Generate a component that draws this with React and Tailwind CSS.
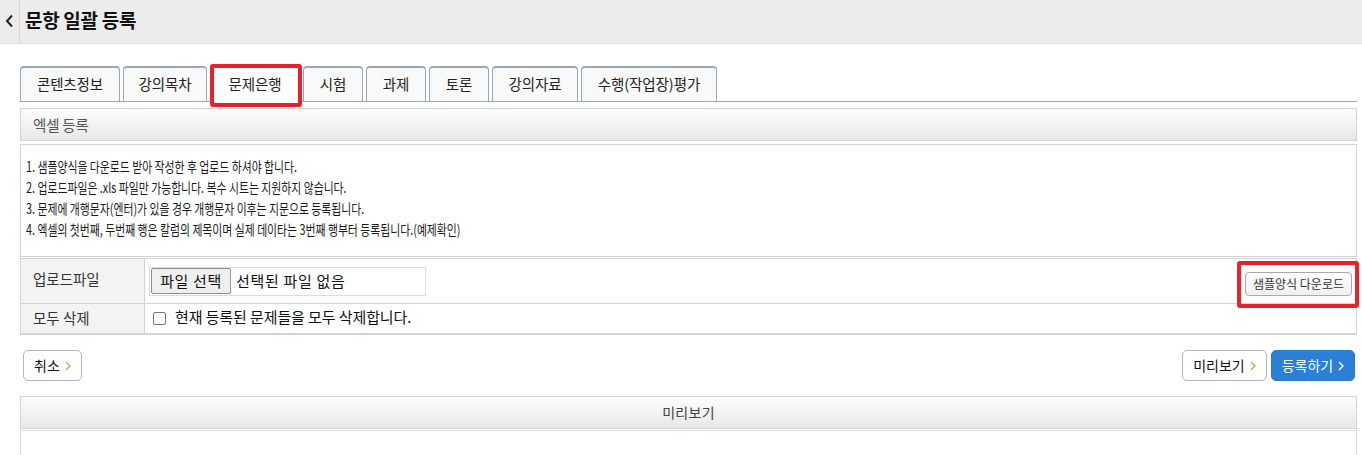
import React from "react";

const tabs = [
  { label: "콘텐츠정보", cls: "w-[100px]" },
  { label: "강의목차", cls: "w-[84px]" },
  { label: "문제은행", cls: "w-[90px]", active: true },
  { label: "시험", cls: "w-[60px]" },
  { label: "과제", cls: "w-[60px]" },
  { label: "토론", cls: "w-[60px]" },
  { label: "강의자료", cls: "w-[86px]" },
  { label: "수행(작업장)평가", cls: "w-[136px]" },
];

const notes = [
  "1. 샘플양식을 다운로드 받아 작성한 후 업로드 하셔야 합니다.",
  "2. 업로드파일은 .xls 파일만 가능합니다. 복수 시트는 지원하지 않습니다.",
  "3. 문제에 개행문자(엔터)가 있을 경우 개행문자 이후는 지문으로 등록됩니다.",
  "4. 엑셀의 첫번째, 두번째 행은 칼럼의 제목이며 실제 데이타는 3번째 행부터 등록됩니다.(예제확인)",
];

function Chevron({ color = "#c9a35a" }) {
  return (
    <svg width="6" height="10" viewBox="0 0 6 10" className="ml-[5px]">
      <path d="M1 1 L5 5 L1 9" fill="none" stroke={color} strokeWidth="1.4" />
    </svg>
  );
}

export default function App() {
  return (
    <div className="min-h-[455px] bg-white font-['Noto_Sans_CJK_KR',sans-serif] text-[#222]">
      {/* header */}
      <div className="flex h-[44px] items-stretch border-b border-[#dcdcdc] bg-[#ececec]">
        <div className="flex w-[20px] items-center justify-center border-r border-[#d6d6d6] pb-[2px]">
          <svg width="9" height="14" viewBox="0 0 9 14">
            <path d="M7 1.5 L2 7 L7 12.5" fill="none" stroke="#222" strokeWidth="2" />
          </svg>
        </div>
        <h1 className="flex items-center pb-[3px] pl-[5px] text-[19px] font-bold tracking-[-0.3px] text-[#111]">
          문항 일괄 등록
        </h1>
      </div>

      <div className="ml-[20px] mr-[5px]">
        {/* tabs */}
        <div className="mt-[22px] flex gap-[3px] border-b border-[#98a8b9]">
          {tabs.map((t) => (
            <div
              key={t.label}
              className={`relative -mb-px flex h-[36px] items-center justify-center rounded-t-[4px] border border-t-2 border-[#98a8b9] pb-[2px] text-[14.5px] tracking-[-0.1px] text-[#222] ${t.cls} ${
                t.active ? "border-b-white bg-white" : "bg-[#f9f9f9]"
              }`}
            >
              {t.label}
              {t.active && (
                <div className="absolute -top-[4px] -bottom-[6px] -left-px -right-[3px] rounded-[3px] border-[4px] border-[#e8222c]" />
              )}
            </div>
          ))}
        </div>

        {/* excel section header */}
        <div className="mt-[6px] flex h-[33px] items-center border border-[#d3d3d3] bg-gradient-to-b from-[#fefefe] to-[#e8e8e8] pl-[12px] text-[14.5px] tracking-[-0.2px] text-[#555]">
          엑셀 등록
        </div>

        {/* notes */}
        <div className="mt-[3px] h-[113px] border border-[#d3d3d3] pl-[5px] pt-[11px]">
          <div className="origin-left scale-x-[0.775] whitespace-nowrap">
            {notes.map((n) => (
              <p key={n} className="text-[14px] leading-[21px] text-[#1a1a1a]">
                {n}
              </p>
            ))}
          </div>
        </div>

        {/* form table */}
        <div className="mt-px border border-b-2 border-[#d3d3d3] text-[14.5px]">
          <div className="flex h-[45px] border-b border-[#d3d3d3]">
            <div className="flex w-[124px] items-center border-r border-[#d3d3d3] bg-[#f3f3f3] pb-[4px] pl-[12px] text-[#333]">
              업로드파일
            </div>
            <div className="flex flex-1 items-center justify-between pl-[4px] pr-[4px]">
              <div className="flex h-[29px] w-[277px] items-center border border-[#dcdcdc] pl-px">
                <div className="flex h-[26px] w-[80px] items-center justify-center rounded-[2px] border border-[#8f8f8f] bg-[#efefef] text-[15px] tracking-[0.6px] text-[#111]">
                  파일 선택
                </div>
                <span className="ml-[5px] text-[15px] tracking-[0.7px] text-[#111]">선택된 파일 없음</span>
              </div>
              <div className="relative mt-[5px]">
                <div className="flex h-[24px] w-[107px] items-center justify-center rounded-[4px] border border-[#a9a9a9] bg-gradient-to-b from-white to-[#f0f0f0] text-[12px] text-[#333]">
                  샘플양식 다운로드
                </div>
                <div className="absolute -top-[11px] -bottom-[12px] -left-[8px] -right-[7px] rounded-[3px] border-[4px] border-[#e8222c]" />
              </div>
            </div>
          </div>
          <div className="flex h-[29px]">
            <div className="flex w-[124px] items-center border-r border-[#d3d3d3] bg-[#f3f3f3] pb-[2px] pl-[12px] text-[#333]">
              모두 삭제
            </div>
            <div className="flex flex-1 items-center pl-[8px]">
              <span className="h-[13px] w-[13px] rounded-[2px] border border-[#767676] bg-white" />
              <span className="ml-[9px] pb-[3px] text-[15px] tracking-[-0.1px] text-[#111]">현재 등록된 문제들을 모두 삭제합니다.</span>
            </div>
          </div>
        </div>

        {/* buttons */}
        <div className="mt-[15px] flex items-center justify-between pl-[3px] pr-[2px] text-[14px]">
          <button className="flex h-[31px] w-[59px] items-center justify-center rounded-[5px] border border-[#b5b5b5] bg-white text-[#111]">
            취소
            <Chevron />
          </button>
          <div className="flex gap-[4px]">
            <button className="flex h-[31px] w-[85px] items-center justify-center rounded-[5px] border border-[#b5b5b5] bg-white text-[#111]">
              미리보기
              <Chevron />
            </button>
            <button className="flex h-[31px] w-[84px] items-center justify-center rounded-[5px] border border-[#2a78c8] bg-[#2b7fd4] text-white">
              등록하기
              <Chevron color="#ffffff" />
            </button>
          </div>
        </div>

        {/* preview */}
        <div className="mt-[15px] flex h-[33px] items-center justify-center border border-[#d3d3d3] bg-gradient-to-b from-[#fefefe] to-[#e8e8e8] text-[14px] tracking-[0.3px] text-[#444]">
          미리보기
        </div>
        <div className="mt-px h-[60px] border border-[#dcdcdc]" />
      </div>
    </div>
  );
}
